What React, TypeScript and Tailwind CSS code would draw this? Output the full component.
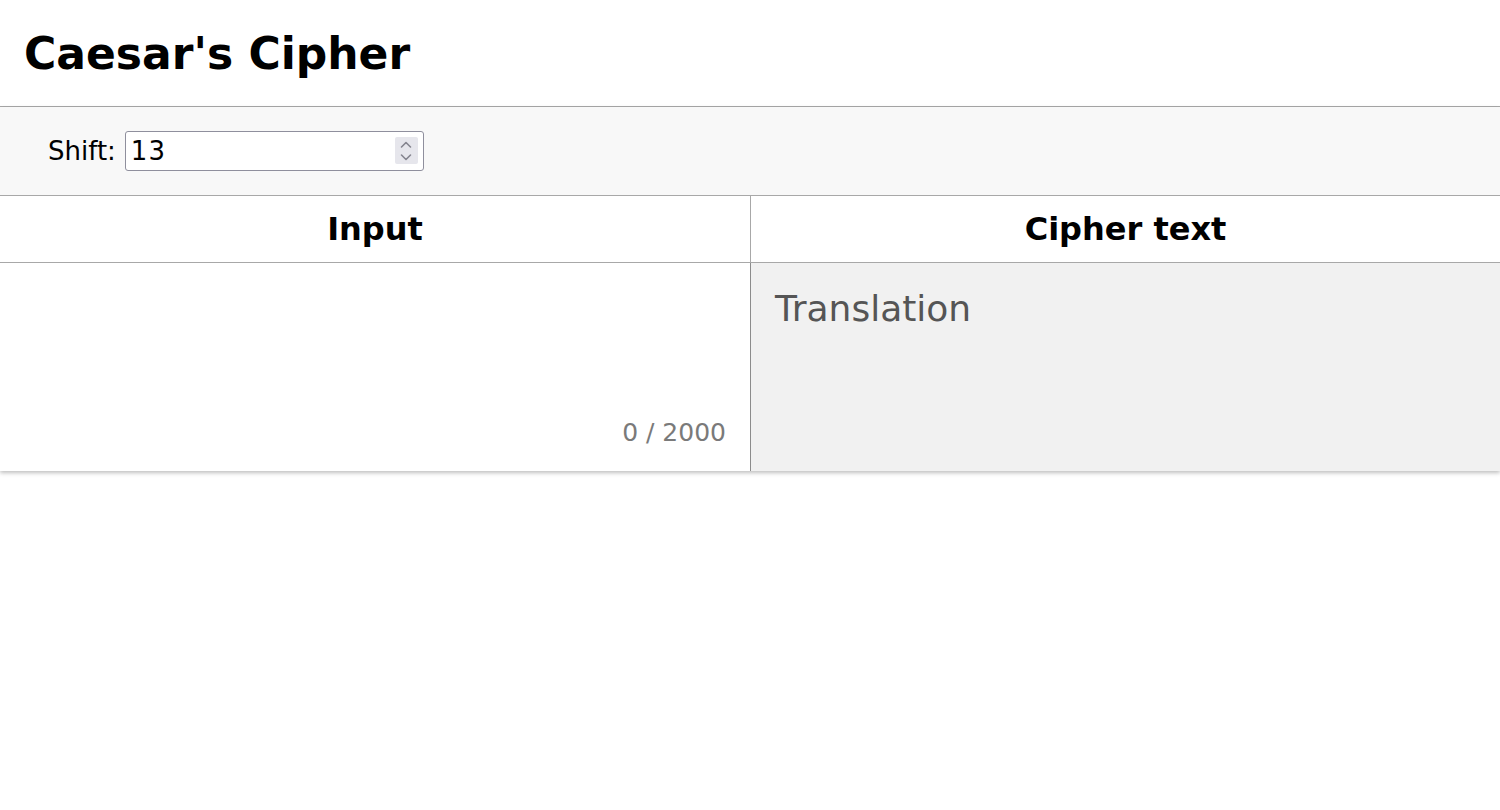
import { useState } from "react";

function Spinner() {
  return (
    <span className="pointer-events-none absolute right-[6px] top-[6px] flex h-[27px] w-[23px] flex-col items-center justify-center rounded-[2px] bg-[#e6e6ec]">
      <svg width="14" height="24" viewBox="0 0 14 24" fill="none" stroke="#85858f" strokeWidth="1.6" strokeLinecap="round" strokeLinejoin="round">
        <path d="M2.5 8 L7 3.5 L11.5 8" />
        <path d="M2.5 16 L7 20.5 L11.5 16" />
      </svg>
    </span>
  );
}

export default function App() {
  const [shift, setShift] = useState("13");
  const [text, setText] = useState("");

  return (
    <main className="min-h-[810px] bg-white text-black [font-family:'DejaVu_Sans',sans-serif]">
      <header className="flex h-[107px] items-center border-b border-[#a8a8a8] px-[24px]">
        <h1 className="pt-[2px] text-[44px] font-bold leading-none">Caesar's Cipher</h1>
      </header>

      <section className="shadow-[0_2px_4px_rgba(0,0,0,0.25)]">
        <div className="flex h-[89px] items-center gap-[9px] border-b border-[#a8a8a8] bg-[#f8f8f8] px-[48px]">
          <label htmlFor="shift" className="text-[26px]">
            Shift:
          </label>
          <div className="relative">
            <input
              id="shift"
              value={shift}
              onChange={(e) => setShift(e.target.value)}
              className="h-[40px] w-[299px] rounded-[3px] border border-[#8f8f9d] bg-white px-[5px] text-[26px] tracking-[1px] outline-none"
            />
            <Spinner />
          </div>
        </div>

        <div className="grid grid-cols-2">
          <h2 className="flex h-[67px] items-center justify-center border-b border-[#a8a8a8] text-[32px] font-bold">
            Input
          </h2>
          <h2 className="flex h-[67px] items-center justify-center border-b border-l border-[#a8a8a8] text-[32px] font-bold">
            Cipher text
          </h2>

          <div className="relative h-[208px]">
            <textarea
              value={text}
              onChange={(e) => setText(e.target.value)}
              className="h-full w-full resize-none bg-white p-[24px] text-[32px] outline-none"
            />
            <span className="pointer-events-none absolute bottom-[20px] right-[24px] text-[25px] text-[#7a7a7a]">
              {text.length} / 2000
            </span>
          </div>
          <div className="h-[208px] border-l border-[#8c8c8c] bg-[#f1f1f1] px-[24px] pt-[24px] text-[36px] leading-[1.2] text-[#555]">
            Translation
          </div>
        </div>
      </section>
    </main>
  );
}
